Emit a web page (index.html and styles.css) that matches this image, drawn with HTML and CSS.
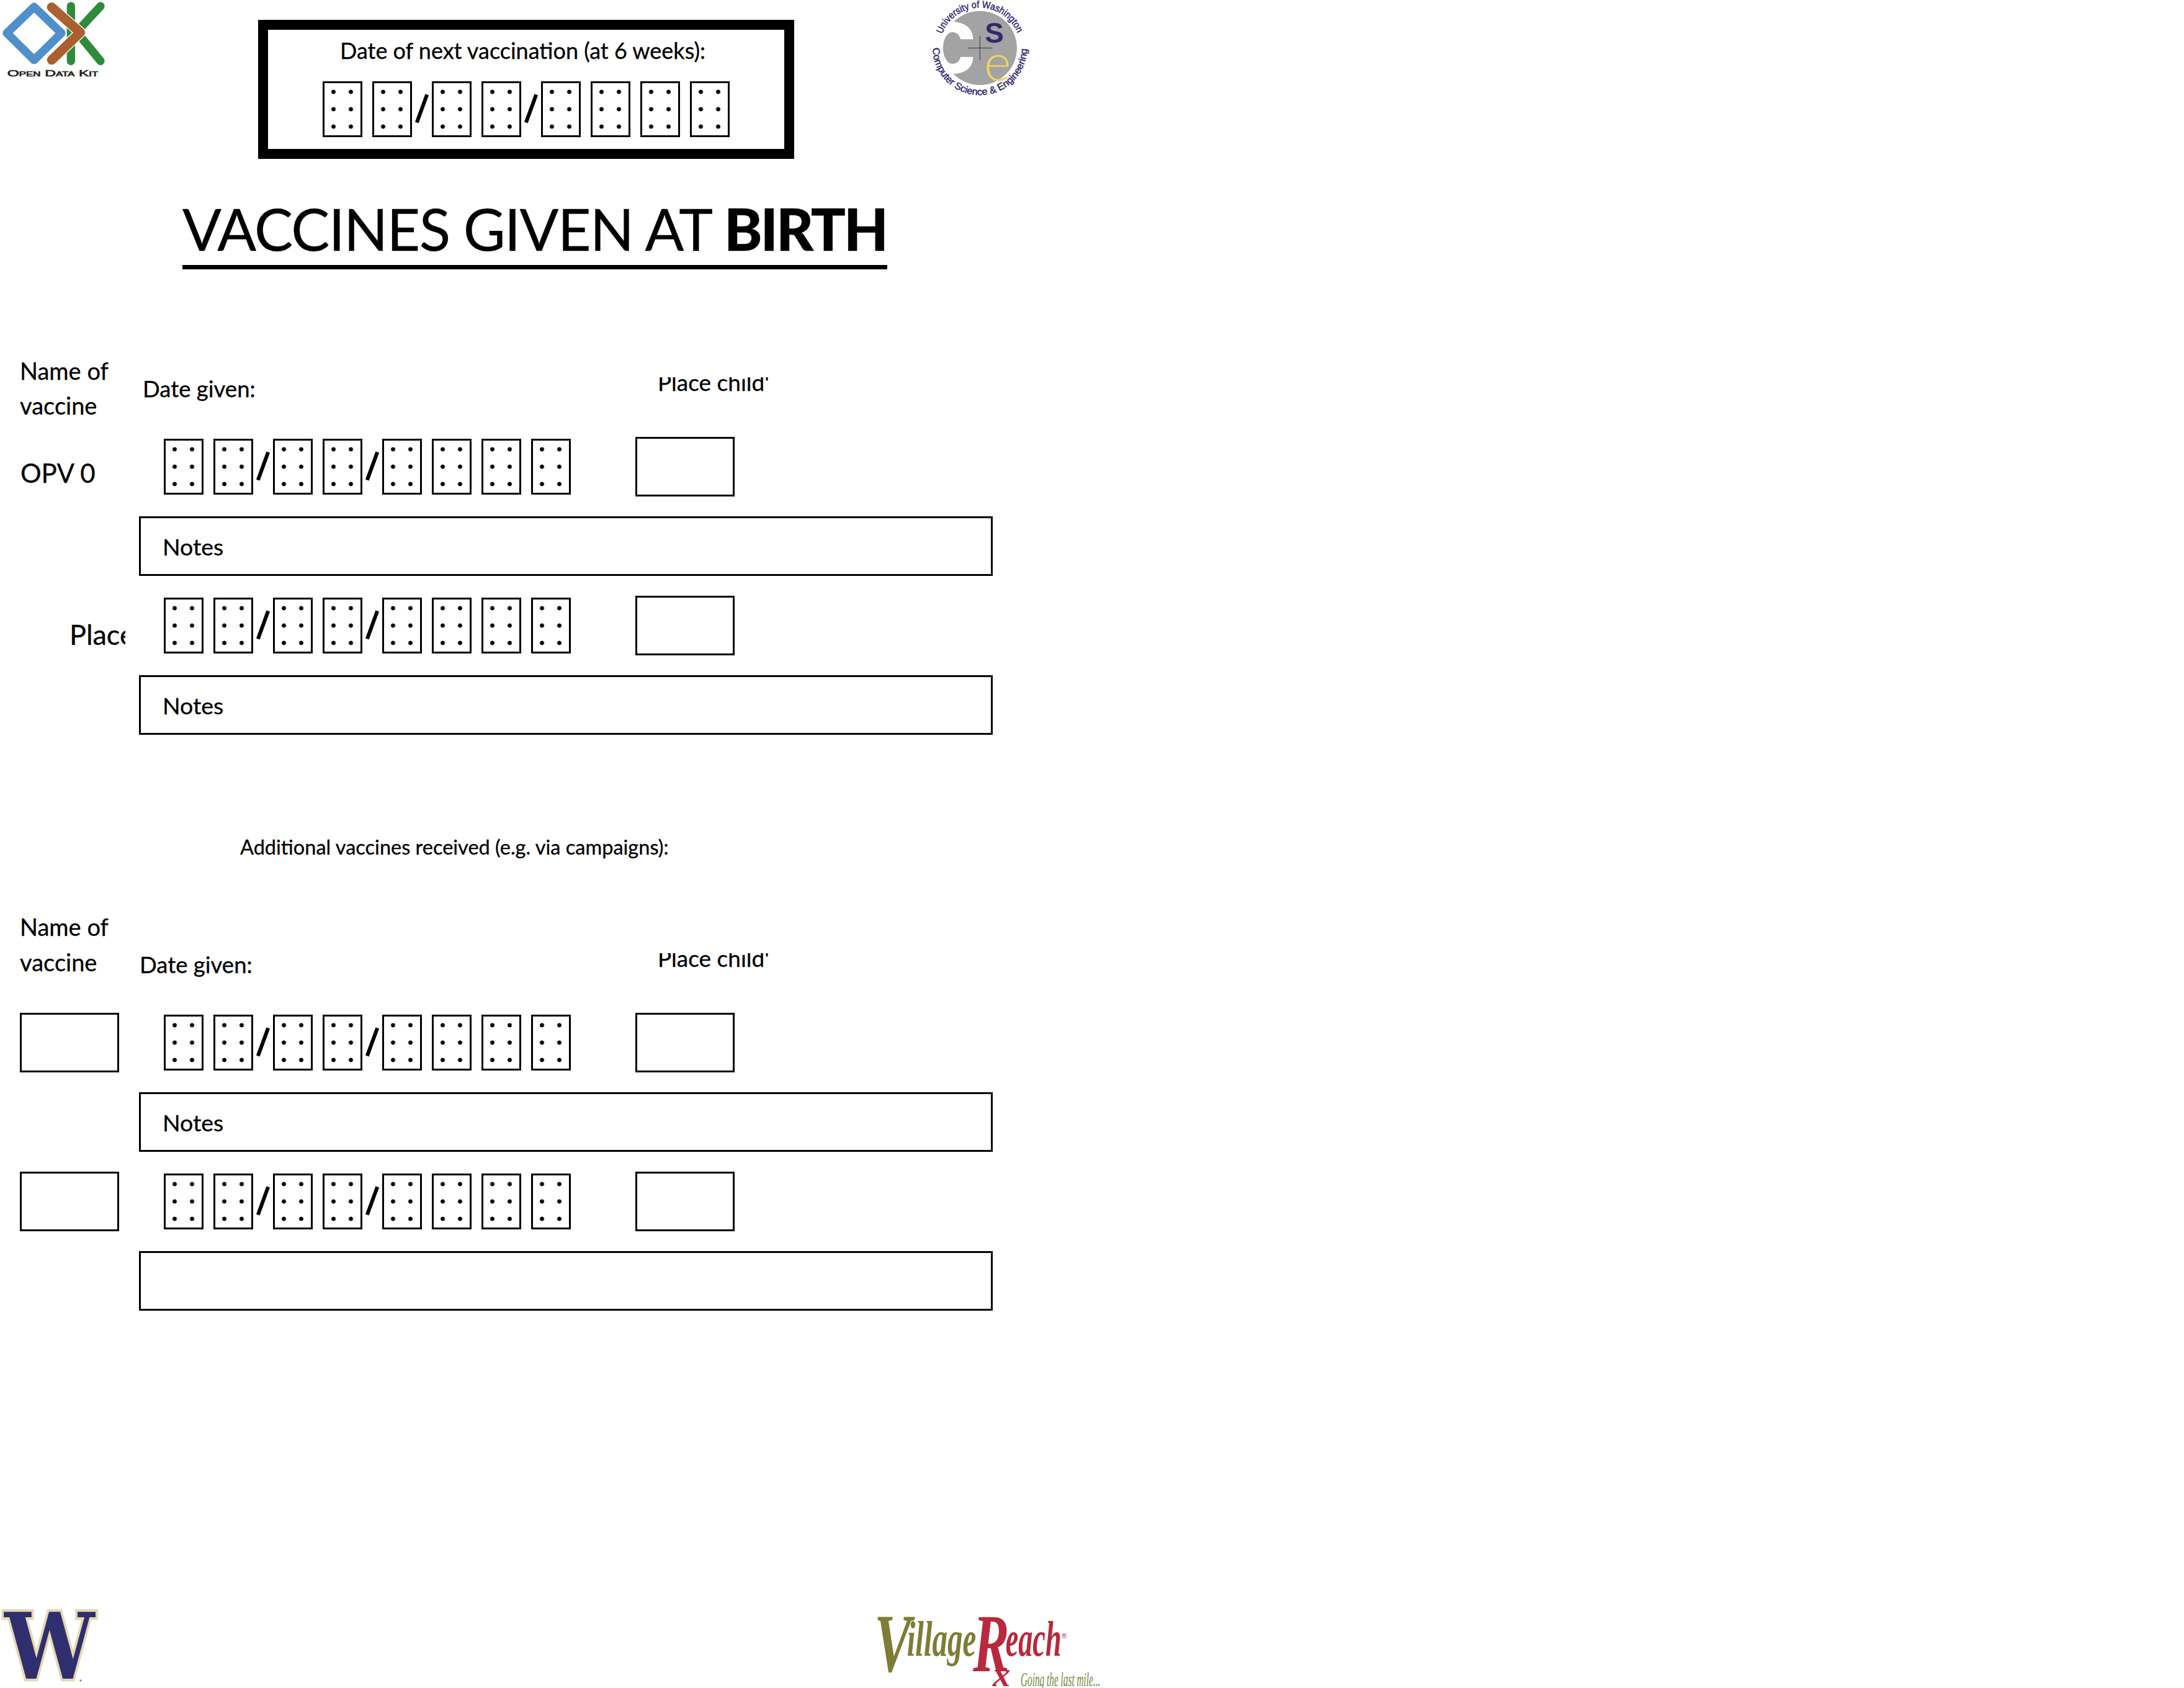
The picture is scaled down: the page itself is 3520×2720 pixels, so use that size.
FILE: index.html
```html
<!DOCTYPE html>
<html lang="en">
<head>
<meta charset="utf-8">
<title>Vaccines given at birth</title>
<link rel="stylesheet" href="styles.css">
</head>
<body>
<main class="page">
  <header class="masthead">
    <svg class="logo-odk" viewBox="0 0 600 420" role="img" aria-label="Open Data Kit">
      <g class="odk-green">
        <path d="M343 30V295"/><path d="M375 150L486 30"/><path d="M375 160L486 295"/>
      </g>
      <path class="odk-halo" d="M250 35L388 157L250 290"/>
      <path class="odk-brown" d="M250 35L388 157L250 290"/>
      <path class="odk-halo odk-halo-blue" d="M33 160L165 33L297 160L165 290Z"/>
      <path class="odk-blue" d="M33 160L165 33L297 160L165 290Z"/>
      <text class="odk-text" x="35" y="368" textLength="440" lengthAdjust="spacingAndGlyphs">Open Data Kit</text>
    </svg>
    <section class="next-box">
      <p class="next-label">Date of next vaccination (at 6 weeks):</p>
      <div class="date">
        <i class="cell"></i><i class="cell"></i><i class="slash"></i><i class="cell"></i><i class="cell"></i><i class="slash"></i><i class="cell"></i><i class="cell"></i><i class="cell"></i><i class="cell"></i>
      </div>
    </section>
    <svg class="logo-cse" viewBox="240 0 660 510" role="img" aria-label="University of Washington Computer Science and Engineering">
      <defs>
        <path id="cse-top" d="M355 165A195 195 0 0 1 721 165"/>
        <path id="cse-bottom" d="M310 232A228 228 0 0 0 766 232"/>
      </defs>
      <circle class="cse-disk" cx="538" cy="232" r="179"/>
      <path class="cse-cut" d="M405 105C470 108 505 140 505 190L445 190C440 170 425 155 405 155C380 155 360 190 360 232L330 232L330 105Z"/>
      <path class="cse-cut" d="M405 358C470 355 505 325 505 275L445 275C440 295 425 308 405 308C380 308 360 275 360 232L330 232L330 358Z"/>
      <path class="cse-cross" d="M480 232H597M538 174V290"/>
      <text class="cse-s" x="562" y="206">S</text>
      <text class="cse-e" x="558" y="390">e</text>
      <text class="cse-ring"><textPath href="#cse-top" textLength="470" lengthAdjust="spacingAndGlyphs">University of Washington</textPath></text>
      <text class="cse-ring"><textPath href="#cse-bottom" textLength="712" lengthAdjust="spacingAndGlyphs">Computer Science &amp; Engineering</textPath></text>
    </svg>
  </header>

  <h1 class="title">VACCINES GIVEN AT <b>BIRTH</b></h1>

  <section class="form form-birth">
    <div class="head">
      <div class="head-name">Name of<br>vaccine</div>
      <div class="head-date">Date given:</div>
      <div class="head-place"><span>Place child's</span></div>
    </div>
    <div class="entries">
      <div class="vaccine vaccine-opv">OPV 0</div>
      <div class="date date-row">
        <i class="cell"></i><i class="cell"></i><i class="slash"></i><i class="cell"></i><i class="cell"></i><i class="slash"></i><i class="cell"></i><i class="cell"></i><i class="cell"></i><i class="cell"></i>
      </div>
      <div class="box"></div>
      <div class="notes">Notes</div>

      <div class="vaccine vaccine-place">Place</div>
      <div class="date date-row">
        <i class="cell"></i><i class="cell"></i><i class="slash"></i><i class="cell"></i><i class="cell"></i><i class="slash"></i><i class="cell"></i><i class="cell"></i><i class="cell"></i><i class="cell"></i>
      </div>
      <div class="box"></div>
      <div class="notes">Notes</div>
    </div>
  </section>

  <p class="additional">Additional vaccines received (e.g. via campaigns):</p>

  <section class="form form-extra">
    <div class="head">
      <div class="head-name">Name of<br>vaccine</div>
      <div class="head-date">Date given:</div>
      <div class="head-place"><span>Place child's</span></div>
    </div>
    <div class="entries">
      <div class="box box-name"></div>
      <div class="date date-row">
        <i class="cell"></i><i class="cell"></i><i class="slash"></i><i class="cell"></i><i class="cell"></i><i class="slash"></i><i class="cell"></i><i class="cell"></i><i class="cell"></i><i class="cell"></i>
      </div>
      <div class="box"></div>
      <div class="notes">Notes</div>

      <div class="box box-name"></div>
      <div class="date date-row">
        <i class="cell"></i><i class="cell"></i><i class="slash"></i><i class="cell"></i><i class="cell"></i><i class="slash"></i><i class="cell"></i><i class="cell"></i><i class="cell"></i><i class="cell"></i>
      </div>
      <div class="box"></div>
      <div class="notes"></div>
    </div>
  </section>

  <footer class="footer">
    <svg class="logo-uw" viewBox="0 60 510 420" role="img" aria-label="University of Washington">
      <text class="uw-w" x="22" y="435" textLength="436" lengthAdjust="spacingAndGlyphs">W</text>
      <circle class="uw-reg" cx="390" cy="444" r="5"/>
    </svg>
    <svg class="logo-vr" viewBox="0 60 1260 420" role="img" aria-label="VillageReach">
      <text class="vr vr-olive" x="88" y="400" textLength="178" lengthAdjust="spacingAndGlyphs">V</text>
      <text class="vr vr-olive vr-small" x="245" y="325" textLength="335" lengthAdjust="spacingAndGlyphs">illage</text>
      <text class="vr vr-red" x="565" y="400" textLength="175" lengthAdjust="spacingAndGlyphs">R</text>
      <text class="vr vr-red vr-small" x="722" y="325" textLength="270" lengthAdjust="spacingAndGlyphs">each</text>
      <text class="vr vr-red vr-tail" x="660" y="472">x</text>
      <text class="vr-reg" x="993" y="240">®</text>
      <text class="vr-tag" x="795" y="470" textLength="385" lengthAdjust="spacingAndGlyphs">Going the last mile...</text>
    </svg>
  </footer>
</main>
</body>
</html>
```

FILE: styles.css
```css
html, body {
  margin: 0;
  background: #fff;
}

.page {
  width: 3520px;
  height: 2720px;
  display: flex;
  flex-direction: column;
  overflow: hidden;
  font-family: Lato, "Liberation Sans", sans-serif;
  color: #000;
  -webkit-text-stroke: 0.3px #000;
}

/* masthead */
.masthead {
  display: flex;
  align-items: flex-start;
  height: 256px;
  flex: none;
}

.logo-odk {
  width: 200px;
  height: 140px;
  margin-right: 216px;
  flex: none;
}

.odk-green path {
  fill: none;
  stroke: #2e8b3c;
  stroke-width: 40;
  stroke-linecap: round;
}

.odk-brown,
.odk-halo {
  fill: none;
  stroke-linecap: round;
  stroke-linejoin: round;
}

.odk-brown {
  stroke: #aa6030;
  stroke-width: 46;
}

.odk-halo {
  stroke: #fff;
  stroke-width: 54;
}

.odk-halo-blue {
  stroke-width: 48;
}

.odk-blue {
  fill: none;
  stroke: #4f90ca;
  stroke-width: 40;
  stroke-linejoin: round;
}

.odk-text {
  font-family: "Liberation Sans", sans-serif;
  font-variant: small-caps;
  font-size: 44px;
  fill: #222;
  stroke: #222;
  stroke-width: 2;
  -webkit-text-stroke: 0;
}

.next-box {
  box-sizing: border-box;
  width: 864px;
  height: 224px;
  margin-top: 32px;
  padding: 13px 0 0 88px;
  border: 16px solid #000;
  flex: none;
}

.next-label {
  margin: 0 0 30px 28px;
  font-size: 36px;
  line-height: 40px;
  white-space: nowrap;
}

.logo-cse {
  width: 220px;
  height: 170px;
  margin-left: 200px;
  flex: none;
}

.cse-disk { fill: #a3a3a3; }
.cse-cut { fill: #fff; }
.cse-cross { fill: none; stroke: #333; stroke-width: 3; }

.cse-s {
  font-family: "Liberation Sans", sans-serif;
  font-weight: 700;
  font-size: 137px;
  fill: #33286e;
  -webkit-text-stroke: 0;
}

.cse-e {
  font-family: Lato, sans-serif;
  font-weight: 300;
  font-size: 250px;
  fill: #f1d35f;
  -webkit-text-stroke: 3px #f1d35f;
}

.cse-ring {
  font-family: "Liberation Sans", sans-serif;
  font-size: 47px;
  fill: #33286e;
  stroke: #33286e;
  stroke-width: 1.5;
  -webkit-text-stroke: 1.5px #33286e;
}

/* title */
.title {
  box-sizing: border-box;
  flex: none;
  width: 1136px;
  height: 114px;
  margin: 64px 0 0 294px;
  border-bottom: 7px solid #000;
  font-size: 93px;
  font-weight: 400;
  line-height: 96px;
  letter-spacing: -1.6px;
  white-space: nowrap;
}

.title b {
  font-weight: 900;
  letter-spacing: -3px;
}

/* date fields */
.date {
  display: flex;
  align-items: flex-start;
}

.date-row {
  margin: 3px 0 0 40px;
}

.cell {
  box-sizing: border-box;
  width: 64px;
  height: 90px;
  margin-right: 16px;
  border: 3px solid #000;
  flex: none;
  background-image: radial-gradient(circle, #000 3.2px, transparent 3.8px);
  background-origin: padding-box;
  background-size: 28px 28px;
  background-position: 0.5px 0;
}

.slash {
  position: relative;
  width: 16px;
  height: 90px;
  flex: none;
}

.slash::before {
  content: "";
  position: absolute;
  left: -3px;
  top: 20px;
  width: 6px;
  height: 48px;
  background: #000;
  transform: rotate(20deg);
}

/* form */
.form {
  flex: none;
}

.form-birth {
  margin-top: 94px;
}

.form-extra {
  margin-top: 71px;
}

.head {
  display: grid;
  grid-template-columns: 224px 800px 1fr;
  width: 1600px;
  height: 176px;
}

.head-name {
  padding-left: 32px;
  font-size: 38px;
  line-height: 56px;
}

.form-birth .head-name {
  padding-top: 41px;
}

.form-extra .head-name {
  padding-top: 9px;
  line-height: 57px;
}

.head-date {
  margin: 78px 0 0 6px;
  font-size: 36.5px;
  line-height: 40px;
}

.form-extra .head-date {
  margin-left: 1px;
}

.head-place {
  width: 180px;
  height: 30px;
  margin: 80px 0 0 36px;
  overflow: hidden;
  font-size: 37px;
  line-height: 15px;
  white-space: nowrap;
}

.head-place span {
  display: block;
}

.entries {
  display: grid;
  grid-template-columns: 224px 800px 576px;
  grid-auto-rows: 96px;
  row-gap: 32px;
  width: 1600px;
}

.box {
  box-sizing: border-box;
  width: 160px;
  height: 96px;
  border: 3px solid #000;
}

.box-name {
  margin-left: 32px;
}

.vaccine {
  line-height: 96px;
  overflow: hidden;
  white-space: nowrap;
}

.vaccine-opv {
  padding: 10px 0 0 33px;
  font-size: 42px;
}

.vaccine-place {
  width: 90px;
  margin-left: 112px;
  padding-top: 14px;
  font-size: 45px;
}

.notes {
  grid-column: 2 / -1;
  box-sizing: border-box;
  height: 96px;
  padding-left: 35px;
  border: 3px solid #000;
  font-size: 37.5px;
  line-height: 92px;
}

.additional {
  flex: none;
  margin: 161px 0 0 387px;
  font-size: 32.5px;
  line-height: 40px;
  white-space: nowrap;
}

/* footer */
.footer {
  display: flex;
  flex: none;
  height: 140px;
  margin-top: auto;
}

.logo-uw {
  width: 170px;
  height: 140px;
  flex: none;
}

.uw-w {
  font-family: "DejaVu Serif", serif;
  font-weight: 700;
  font-size: 446px;
  fill: #2f2f6f;
  stroke: #e6d8b2;
  stroke-width: 26;
  stroke-linejoin: miter;
  paint-order: stroke;
  -webkit-text-stroke: 0;
}

.uw-reg { fill: #888; }

.logo-vr {
  width: 420px;
  height: 140px;
  margin-left: 1210px;
  flex: none;
  -webkit-text-stroke: 0;
}

.vr {
  font-family: "Liberation Serif", serif;
  font-weight: 700;
  font-style: italic;
  font-size: 400px;
}

.vr-small { font-size: 240px; }
.vr-tail { font-size: 170px; }
.vr-olive { fill: #7d7d35; }
.vr-red { fill: #b8293d; }

.vr-reg {
  font-family: "Liberation Sans", sans-serif;
  font-size: 34px;
  fill: #b8293d;
}

.vr-tag {
  font-family: "Liberation Serif", serif;
  font-style: italic;
  font-size: 92px;
  fill: #6f8a3a;
}
```
